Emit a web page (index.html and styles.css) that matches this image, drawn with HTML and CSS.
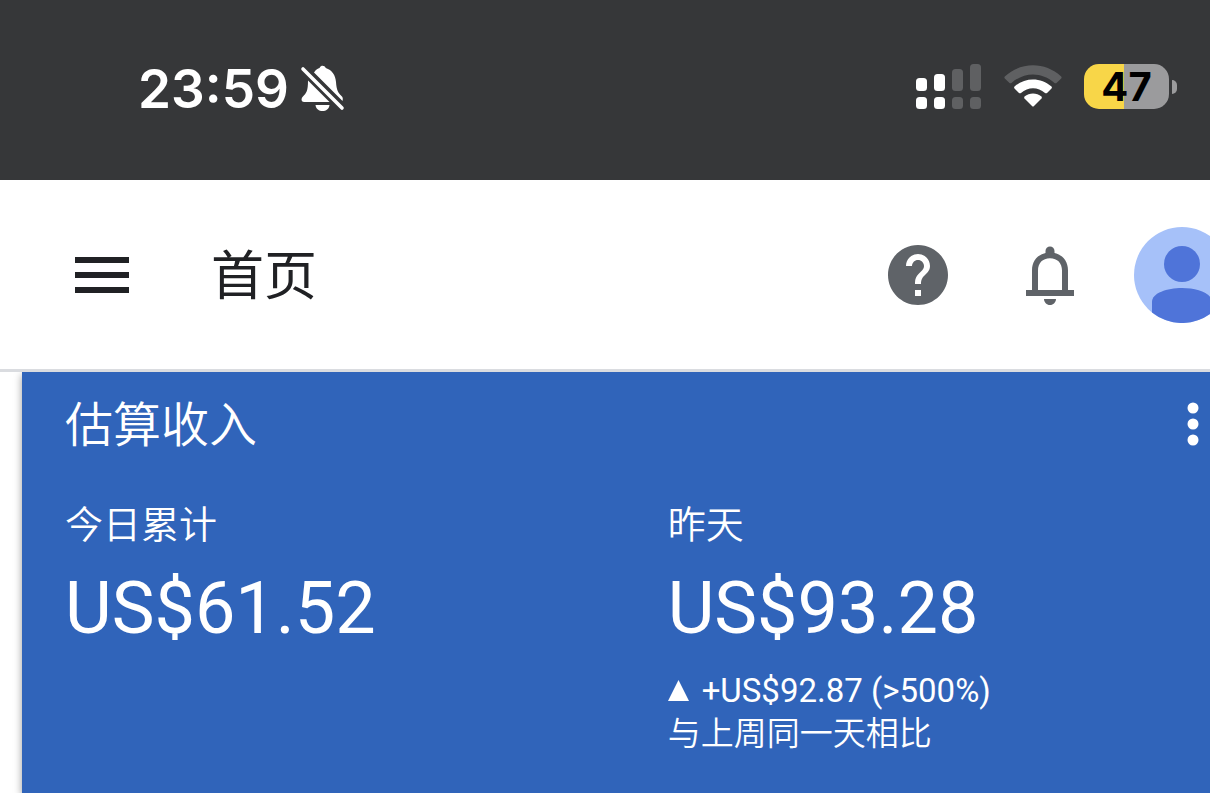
FILE: index.html
```html
<!DOCTYPE html>
<html lang="zh-CN">
<head>
  <meta charset="UTF-8">
  <meta name="viewport" content="width=device-width, initial-scale=1.0">
  <title>首页</title>
  <link rel="stylesheet" href="styles.css">
</head>
<body>
  <div class="status-bar">
    <div class="status-left">
      <span class="time">23:59</span>
      <svg class="muted" width="46" height="48" viewBox="0 0 46 48" fill="#fff">
        <path d="M14 7.500C16 4.500 18 3.500 19.500 3C20.500 1.200 21.500 .8 22.500 .8C24 .8 25 1.500 25.800 3C32 5 35.500 10 36 17C36.500 25 38 27.500 41.500 31C43 32.500 43 33.500 42.500 36Z"/>
        <path d="M8 15.500L29.500 37H4C1.500 37 .8 34 2.500 32C6.500 28 8 26 8 15.500Z"/>
        <path d="M15.500 40H29.500C29 44 26 46 22.500 46C19 46 16 44 15.500 40Z"/>
        <path d="M4 4L43 43" stroke="#363739" stroke-width="8"/>
        <path d="M3 4L42 43" stroke="#fff" stroke-width="3.600" stroke-linecap="round"/>
      </svg>
    </div>
    <div class="status-right">
      <svg width="66" height="45" viewBox="0 0 66 45" fill="#fff">
        <rect x="0" y="14" width="11" height="13" rx="3.500"/>
        <rect x="18" y="10" width="11" height="17" rx="3.500"/>
        <rect x="0" y="33" width="11" height="12" rx="3.500"/>
        <rect x="18" y="33" width="11" height="12" rx="3.500"/>
        <g fill="#5f6062">
          <rect x="36" y="5" width="11" height="22" rx="3.500"/>
          <rect x="54" y="0" width="11" height="27" rx="3.500"/>
          <rect x="36" y="33" width="11" height="12" rx="3.500"/>
          <rect x="54" y="33" width="11" height="12" rx="3.500"/>
        </g>
      </svg>
      <svg width="58" height="45" viewBox="0 0 58 45" fill="#fff">
        <path fill="#5f6062" d="M.8 12.500C17 -2.500 41 -2.500 57.200 12.500Q58 13.500 57.200 14.500L52.500 19Q51.500 19.700 50.500 19C38 7.500 20 7.500 7.500 19Q6.500 19.700 5.500 19L.8 14.500Q0 13.500 .8 12.500Z"/>
        <path d="M10.500 22.500C21 13 37 13 47.500 22.500Q48.300 23.500 47.500 24.500L43 29Q42 29.700 41 29C34 22.500 24 22.500 17 29Q16 29.700 15 29L10.500 24.500Q9.700 23.500 10.500 22.500Z"/>
        <path d="M20.500 32.500C25.500 28.500 32.500 28.500 37.500 32.500Q38.300 33.500 37.500 34.500L30 42Q29 43 28 42L20.500 34.500Q19.700 33.500 20.500 32.500Z"/>
      </svg>
      <div class="battery">
        <span class="battery-level">47</span>
        <span class="battery-cap"></span>
      </div>
    </div>
  </div>

  <header class="app-bar">
    <button class="icon-btn" aria-label="菜单">
      <svg width="72" height="72" viewBox="0 0 24 24" fill="#202124"><path d="M3 18h18v-2H3v2zm0-5h18v-2H3v2zm0-7v2h18V6H3z"/></svg>
    </button>
    <h1 class="page-title">首页</h1>
    <div class="actions">
      <button class="icon-btn" aria-label="帮助">
        <svg width="72" height="72" viewBox="0 0 24 24" fill="#5f6368"><path d="M12 2C6.480 2 2 6.480 2 12s4.480 10 10 10 10-4.480 10-10S17.520 2 12 2zm1 17h-2v-2h2v2zm2.070-7.750l-.9.920C13.450 12.900 13 13.500 13 15h-2v-.5c0-1.100.45-2.100 1.170-2.830l1.240-1.260c.37-.36.59-.86.59-1.410 0-1.100-.9-2-2-2s-2 .9-2 2H8c0-2.210 1.790-4 4-4s4 1.790 4 4c0 .88-.36 1.680-.93 2.250z"/></svg>
      </button>
      <button class="icon-btn" aria-label="通知">
        <svg width="72" height="72" viewBox="0 0 24 24" fill="#5f6368"><path d="M18 17v-6.500c0-3.070-1.640-5.140-4.500-5.820V4a1.500 1.500 0 0 0-3 0v.68C7.630 5.360 6 7.420 6 10.500V17H4v2h16v-2h-2zm-2 0H8v-6.500C8 8.020 9.510 6.400 12 6.400s4 1.620 4 4.100V17zM10 20h4c0 1.100-.9 2-2 2s-2-.9-2-2z"/></svg>
      </button>
      <button class="avatar" aria-label="账号">
        <svg width="96" height="96" viewBox="0 0 96 96">
          <circle cx="48" cy="48" r="48" fill="#a6c1f9"/>
          <circle cx="48" cy="37" r="18" fill="#4f74d9"/>
          <path d="M18 85.500V75C18 66 33 61 48 61S78 66 78 75V85.500A48 48 0 0 1 18 85.500Z" fill="#4f74d9"/>
        </svg>
      </button>
    </div>
  </header>

  <main class="content">
    <section class="card">
      <div class="card-header">
        <h2 class="card-title">估算收入</h2>
        <button class="icon-btn" aria-label="更多">
          <svg width="12" height="44" viewBox="0 0 12 44" fill="#fff">
            <circle cx="6" cy="6" r="5.500"/>
            <circle cx="6" cy="22" r="5.500"/>
            <circle cx="6" cy="38" r="5.500"/>
          </svg>
        </button>
      </div>
      <div class="metrics">
        <div class="metric">
          <div class="label">今日累计</div>
          <div class="amount">US$61.52</div>
        </div>
        <div class="metric">
          <div class="label">昨天</div>
          <div class="amount">US$93.28</div>
          <div class="change">
            <svg width="21" height="21" viewBox="0 0 21 21" fill="#fff"><path d="M10.500 0L21 21H0z"/></svg>
            <span>+US$92.87 (&gt;500%)</span>
          </div>
          <div class="note">与上周同一天相比</div>
        </div>
      </div>
    </section>
  </main>
</body>
</html>
```
FILE: styles.css
```css
* {
  box-sizing: border-box;
}
body {
  margin: 0;
  min-height: 100vh;
  display: flex;
  flex-direction: column;
  overflow: hidden;
  background: #fff;
  font-family: Roboto, "Noto Sans CJK SC", sans-serif;
}
h1, h2 {
  margin: 0;
  font-weight: 400;
}
svg {
  display: block;
}
button {
  padding: 0;
  border: none;
  background: none;
  cursor: pointer;
}

/* status bar */
.status-bar {
  display: flex;
  justify-content: space-between;
  align-items: flex-start;
  padding: 64px 33px 66px 138px;
  background: #363739;
  color: #fff;
  font-family: Inter, sans-serif;
}
.status-left {
  display: flex;
  align-items: center;
  gap: 11px;
}
.time {
  font-size: 53px;
  line-height: 50px;
  font-weight: 600;
}
.status-right {
  display: flex;
  align-items: center;
  gap: 22px;
}
.battery {
  display: flex;
  align-items: center;
  gap: 3px;
}
.battery-level {
  width: 85px;
  border-radius: 15px;
  background: linear-gradient(to right, #f8d648 47%, #9b9b9d 47%);
  color: #000;
  font-size: 40px;
  line-height: 45px;
  font-weight: 700;
  text-align: center;
}
.battery-cap {
  width: 5px;
  height: 14px;
  border-radius: 0 7px 7px 0;
  background: #9b9b9d;
}

/* app bar */
.app-bar {
  position: relative;
  display: flex;
  align-items: center;
  padding: 47px 0 46px 66px;
  border-bottom: 3px solid #dadce0;
  background: #fff;
}
.page-title {
  margin-left: 73px;
  padding-top: 4px;
  color: #202124;
  font-size: 53px;
  line-height: 72px;
}
.actions {
  display: flex;
  align-items: center;
  gap: 60px;
  margin-left: auto;
  margin-right: -20px;
}
.avatar {
  margin-left: -12px;
}

/* earnings card */
.content {
  flex: 1;
  display: flex;
  padding-left: 22px;
}
.card {
  flex: 1;
  padding: 26px 0 38px 43px;
  background: #3064ba;
  color: #fff;
  box-shadow: 0 3px 8px rgba(0, 0, 0, 0.4);
}
.card-header {
  display: flex;
  justify-content: space-between;
  align-items: flex-start;
  padding-right: 11px;
}
.card-header .icon-btn {
  padding-top: 4px;
}
.card-title {
  font-size: 48px;
  line-height: 56px;
  font-weight: 350;
}
.metrics {
  display: grid;
  grid-template-columns: 10fr 9fr;
  margin-top: 49px;
}
.label {
  font-size: 38px;
  line-height: 44px;
  font-weight: 350;
}
.amount {
  margin-top: 26px;
  font-size: 72px;
  line-height: 72px;
}
.change {
  display: flex;
  align-items: center;
  gap: 13px;
  margin-top: 24px;
  font-size: 33px;
  line-height: 43px;
}
.note {
  font-size: 33px;
  line-height: 43px;
  font-weight: 350;
}
```
